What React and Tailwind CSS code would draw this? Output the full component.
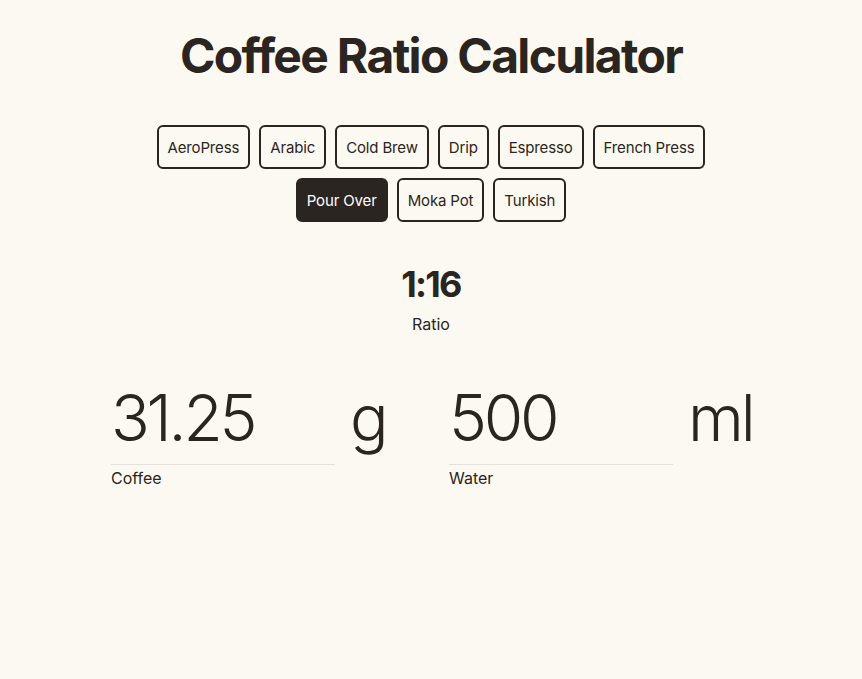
import React, { useState } from 'react';

const methods = [
  { name: 'AeroPress', ratio: 15 },
  { name: 'Arabic', ratio: 12 },
  { name: 'Cold Brew', ratio: 8 },
  { name: 'Drip', ratio: 17 },
  { name: 'Espresso', ratio: 2 },
  { name: 'French Press', ratio: 15 },
  { name: 'Pour Over', ratio: 16 },
  { name: 'Moka Pot', ratio: 10 },
  { name: 'Turkish', ratio: 10 },
];

const App = () => {
  const [method, setMethod] = useState('Pour Over');
  const [water, setWater] = useState(500);

  const ratio = methods.find((m) => m.name === method).ratio;
  const coffee = Math.round((water / ratio) * 100) / 100;

  return (
    <div className="min-h-screen bg-[#fcf9f2] text-[#2b2521] font-['Inter',sans-serif]">
      <div className="w-[640px] mx-auto pt-[26px] flex flex-col items-center">
        <h1 className="text-[48px] leading-[60px] font-bold tracking-[-0.035em]">
          Coffee Ratio Calculator
        </h1>

        <div className="mt-[39px] flex flex-wrap justify-center gap-[9px] w-[580px]">
          {methods.map((m) => {
            const active = m.name === method;
            return (
              <button
                key={m.name}
                onClick={() => setMethod(m.name)}
                className={`h-[44px] px-[9px] rounded-md border-2 border-[#2b2521] text-[15px] leading-[20px] pt-[1px] tracking-[-0.01em] ${
                  active ? 'bg-[#2b2521] text-white' : 'bg-transparent text-[#2b2521]'
                }`}
              >
                {m.name}
              </button>
            );
          })}
        </div>

        <div className="mt-[38px] flex flex-col items-center">
          <div className="text-[36px] leading-[48px] font-bold tracking-[-0.05em]">1:{ratio}</div>
          <div className="mt-[6px] text-[16px] leading-[20px]">Ratio</div>
        </div>

        <div className="mt-[46px] w-full grid grid-cols-2 gap-x-[36px]">
          <div>
            <div className="flex items-baseline">
              <input
                value={coffee}
                readOnly
                className="w-[224px] pb-[8px] bg-transparent outline-none text-[64px] leading-[76px] font-light tracking-[-0.05em] border-b border-[#e6e2dc]"
              />
              <span className="ml-[15px] text-[64px] font-light leading-[76px] tracking-[-0.05em]">g</span>
            </div>
            <div className="mt-[3px] text-[16px] leading-[20px]">Coffee</div>
          </div>
          <div>
            <div className="flex items-baseline">
              <input
                value={water}
                onChange={(e) => setWater(Number(e.target.value) || 0)}
                className="w-[224px] pb-[8px] bg-transparent outline-none text-[64px] leading-[76px] font-light tracking-[-0.05em] border-b border-[#e6e2dc]"
              />
              <span className="ml-[15px] text-[64px] font-light leading-[76px] tracking-[-0.05em]">ml</span>
            </div>
            <div className="mt-[3px] text-[16px] leading-[20px]">Water</div>
          </div>
        </div>
      </div>
    </div>
  );
};

export default App;
